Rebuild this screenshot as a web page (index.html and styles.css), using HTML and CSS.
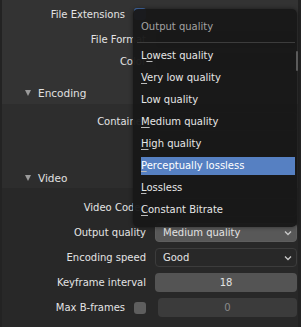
FILE: index.html
```html
<!DOCTYPE html>
<html lang="en">
<head>
    <meta charset="UTF-8">
    <title>Output quality</title>
    <link rel="stylesheet" href="styles.css">
</head>
<body>
    <div class="screen">
        <div class="edge"></div>
        <div class="region">
            <section class="block top">
                <div class="row"><span class="label with-check">File Extensions<span class="check on"></span></span></div>
                <div class="row gap"><span class="label">File Format</span><span class="field select"></span></div>
                <div class="row"><span class="label">Color</span><span class="field dark"></span></div>
                <div class="header"><span class="tri"></span>Encoding</div>
            </section>
            <section class="block mid">
                <div class="row"><span class="label">Container</span><span class="field select"></span></div>
                <div class="header video"><span class="tri"></span>Video</div>
            </section>
            <section class="block low">
                <div class="row"><span class="label">Video Codec</span><span class="field select"></span></div>
                <div class="row"><span class="label">Output quality</span>
                    <span class="field select active">Medium quality
                        <svg class="chev" width="8" height="6" viewBox="0 0 8 6"><polyline points="1,1.5 4,4.5 7,1.5" fill="none" stroke="#c8c8c8" stroke-width="1.3"/></svg>
                    </span>
                </div>
                <div class="row"><span class="label">Encoding speed</span>
                    <span class="field select dark">Good
                        <svg class="chev" width="8" height="6" viewBox="0 0 8 6"><polyline points="1,1.5 4,4.5 7,1.5" fill="none" stroke="#c8c8c8" stroke-width="1.3"/></svg>
                    </span>
                </div>
                <div class="row"><span class="label">Keyframe interval</span><span class="field num">18</span></div>
                <div class="row"><span class="label with-check">Max B-frames<span class="check off"></span></span><span class="field num disabled">0</span></div>
            </section>
        </div>
        <div class="right-edge"></div>

        <div class="menu">
            <div class="menu-title">Output quality</div>
            <div class="menu-sep"></div>
            <div class="item">L<u>o</u>west quality</div>
            <div class="item"><u>V</u>ery low quality</div>
            <div class="item">Low quality</div>
            <div class="item"><u>M</u>edium quality</div>
            <div class="item"><u>H</u>igh quality</div>
            <div class="item selected"><u>P</u>erceptually lossless</div>
            <div class="item"><u>L</u>ossless</div>
            <div class="item"><u>C</u>onstant Bitrate</div>
            <span class="menu-scroll"></span>
        </div>
    </div>
</body>
</html>
```

FILE: styles.css
```css
body {
    margin: 0;
    background: #282828;
    font-family: "DejaVu Sans", sans-serif;
    font-size: 10px;
    color: #e4e4e4;
}

.screen {
    position: relative;
    display: flex;
    width: 301px;
    height: 327px;
    overflow: hidden;
}

.edge {
    width: 2px;
    background: #232323;
}

.right-edge {
    width: 3px;
    background: #232323;
}

.region {
    width: 296px;
    display: flex;
    flex-direction: column;
}

.block {
    display: flex;
    flex-direction: column;
}

.top {
    background: #333333;
    height: 104px;
    padding-top: 4px;
    box-sizing: border-box;
}

.mid {
    background: #2d2d2d;
    height: 84px;
    padding-top: 7px;
    box-sizing: border-box;
}

.low {
    background: #282828;
    flex: 1;
    padding-top: 8px;
    gap: 3px;
}

.row {
    display: grid;
    grid-template-columns: 144px 142px;
    column-gap: 9px;
    height: 22px;
    align-items: center;
}

.row.gap {
    margin-top: 3px;
}

.label {
    text-align: right;
    white-space: nowrap;
}

.label.with-check {
    display: flex;
    justify-content: flex-end;
    align-items: center;
    gap: 9px;
}

.field {
    height: 19px;
    border-radius: 4px;
    box-sizing: border-box;
    display: flex;
    align-items: center;
    padding-left: 7px;
    position: relative;
    white-space: nowrap;
}

.select {
    background: #282828;
    border: 1px solid #3c3c3c;
}

.dark {
    background: #282828;
    border: 1px solid #3c3c3c;
}

.select.active {
    background: #585858;
    border-color: #5e5e5e;
}

.chev {
    position: absolute;
    right: 4px;
    top: 6px;
}

.num {
    background: #545454;
    justify-content: center;
    padding-left: 0;
}

.num.disabled {
    background: #3b3b3b;
    color: #8a8a8a;
    margin-left: 3px;
    width: 139px;
}

.check {
    width: 12px;
    height: 12px;
    border-radius: 3px;
    display: inline-block;
    box-sizing: border-box;
    flex: none;
}

.check.on {
    background: #4772b3;
    margin-top: -1px;
}

.check.off {
    background: #5e5e5e;
    margin-top: 2px;
}

.header {
    display: flex;
    align-items: center;
    height: 22px;
    margin-top: 10px;
    padding-left: 23px;
    font-size: 10.5px;
    color: #e0e0e0;
}

.header.video {
    margin-top: 35px;
}

.tri {
    width: 0;
    height: 0;
    border-left: 3.5px solid transparent;
    border-right: 3.5px solid transparent;
    border-top: 6px solid #9a9a9a;
    margin-right: 7px;
}

.menu {
    position: absolute;
    left: 133px;
    top: 9px;
    width: 164px;
    height: 218px;
    box-sizing: border-box;
    background: rgba(24, 24, 24, 0.96);
    border-radius: 5px;
    padding: 7px 2px 0 1px;
    box-shadow: 0 0 4px rgba(0, 0, 0, 0.5);
}

.menu-title {
    height: 22px;
    line-height: 22px;
    padding-left: 7px;
    color: #a2a2a2;
}

.menu-sep {
    height: 1px;
    background: #3c3c3c;
    margin: 4px 0 2px 3px;
}

.item {
    height: 22px;
    line-height: 22px;
    padding-left: 7px;
    color: #e6e6e6;
    white-space: nowrap;
}

.item u {
    text-decoration-color: #bbbbbb;
    text-underline-offset: 2px;
}

.item.selected {
    background: #5680c2;
    background-clip: content-box;
    padding-top: 2px;
    padding-bottom: 2px;
    height: 18px;
    line-height: 18px;
    color: #ffffff;
}

.menu-scroll {
    position: absolute;
    right: -1px;
    top: 42px;
    width: 2px;
    height: 20px;
    border-radius: 1px;
    background: #5a5a5a;
}
```
